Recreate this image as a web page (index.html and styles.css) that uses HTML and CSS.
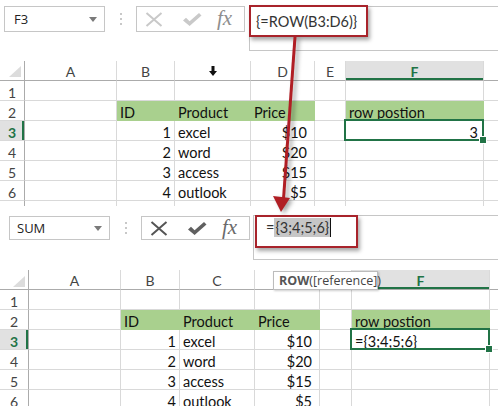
FILE: index.html
```html
<!DOCTYPE html>
<html>
<head>
<meta charset="utf-8">
<link rel="stylesheet" href="styles.css">
</head>
<body>
<section class="shot shot-top">
  <div class="fbar">
    <div class="namebox"><span>F3</span><i class="dd"></i></div>
    <div class="sep"><i></i><i></i><i></i></div>
    <div class="fxbox dim">
      <svg class="ico-x" width="18" height="15" viewBox="0 0 18 15"><path d="M1.5 1 L16.5 14 M16.5 1 L1.5 14" /></svg>
      <svg class="ico-ok" width="20" height="15" viewBox="0 0 20 15"><path d="M1 8.5 L4 5.8 L7.6 9.2 L17 1 L19.5 3.4 L7.6 14 Z" /></svg>
      <span class="fx">fx</span>
    </div>
    <div class="input in-top">
      <span class="ftext">{=ROW(B3:D6)}</span>
      <div class="redbox rb-top"></div>
    </div>
  </div>
  <div class="grid g-top">
    <div class="h corner"><i class="tri"></i></div><div class="h">A</div><div class="h">B</div><div class="h"><svg width="8" height="10" viewBox="0 0 8 10"><path d="M2.5 0 H5.5 V5 H8 L4 10 L0 5 H2.5 Z" fill="#111"/></svg></div><div class="h">D</div><div class="h">E</div><div class="h hsel">F</div><div class="h last"></div>
    <div class="rh">1</div><div class="c"></div><div class="c"></div><div class="c"></div><div class="c"></div><div class="c"></div><div class="c"></div><div class="c last"></div>
    <div class="rh">2</div><div class="c"></div><div class="c g">ID</div><div class="c g">Product</div><div class="c g">Price</div><div class="c"></div><div class="c g">row postion</div><div class="c last"></div>
    <div class="rh rsel">3</div><div class="c"></div><div class="c r">1</div><div class="c">excel</div><div class="c r cur">$10</div><div class="c"></div><div class="c r sel">3</div><div class="c last"></div>
    <div class="rh">4</div><div class="c"></div><div class="c r">2</div><div class="c">word</div><div class="c r cur">$20</div><div class="c"></div><div class="c"></div><div class="c last"></div>
    <div class="rh">5</div><div class="c"></div><div class="c r">3</div><div class="c">access</div><div class="c r cur">$15</div><div class="c"></div><div class="c"></div><div class="c last"></div>
    <div class="rh">6</div><div class="c"></div><div class="c r">4</div><div class="c">outlook</div><div class="c r cur">$5</div><div class="c"></div><div class="c"></div><div class="c last"></div>
    <div class="rh"></div><div class="c"></div><div class="c"></div><div class="c"></div><div class="c"></div><div class="c"></div><div class="c"></div><div class="c last"></div>
  </div>
</section>

<section class="shot shot-bottom">
  <div class="fbar">
    <div class="namebox"><span>SUM</span><i class="dd"></i></div>
    <div class="sep"><i></i><i></i><i></i></div>
    <div class="fxbox">
      <svg class="ico-x" width="18" height="15" viewBox="0 0 18 15"><path d="M1.5 1 L16.5 14 M16.5 1 L1.5 14" /></svg>
      <svg class="ico-ok" width="20" height="15" viewBox="0 0 20 15"><path d="M1 8.5 L4 5.8 L7.6 9.2 L17 1 L19.5 3.4 L7.6 14 Z" /></svg>
      <span class="fx">fx</span>
    </div>
    <div class="input in-bot">
      <span class="ftext">=<span class="hl">{3;4;5;6}</span><span class="caret"></span></span>
      <div class="redbox rb-bot"></div>
    </div>
  </div>
  <div class="grid g-bot">
    <div class="h corner"><i class="tri"></i></div><div class="h">A</div><div class="h">B</div><div class="h">C</div><div class="h"></div><div class="h"></div><div class="h hsel">F</div><div class="h last"></div>
    <div class="rh">1</div><div class="c"></div><div class="c"></div><div class="c"></div><div class="c"></div><div class="c"></div><div class="c"></div><div class="c last"></div>
    <div class="rh">2</div><div class="c"></div><div class="c g">ID</div><div class="c g">Product</div><div class="c g">Price</div><div class="c"></div><div class="c g">row postion</div><div class="c last"></div>
    <div class="rh rsel">3</div><div class="c"></div><div class="c r">1</div><div class="c">excel</div><div class="c r cur">$10</div><div class="c"></div><div class="c sel">={3;4;5;6}</div><div class="c last"></div>
    <div class="rh">4</div><div class="c"></div><div class="c r">2</div><div class="c">word</div><div class="c r cur">$20</div><div class="c"></div><div class="c"></div><div class="c last"></div>
    <div class="rh">5</div><div class="c"></div><div class="c r">3</div><div class="c">access</div><div class="c r cur">$15</div><div class="c"></div><div class="c"></div><div class="c last"></div>
    <div class="rh">6</div><div class="c"></div><div class="c r">4</div><div class="c">outlook</div><div class="c r cur">$5</div><div class="c"></div><div class="c"></div><div class="c last"></div>
    <div class="tip"><b>ROW</b>([reference])</div>
  </div>
</section>

<svg class="arrow" width="498" height="406" viewBox="0 0 498 406">
  <line x1="295" y1="37" x2="283.5" y2="199" />
  <path d="M273 196 L290 198 L281 212 Z" />
</svg>
</body>
</html>
```

FILE: styles.css
```css
* { box-sizing: border-box; margin: 0; padding: 0; }
html, body { width: 498px; height: 406px; overflow: hidden; background: #fff; }
body { position: relative; font-family: Lato, "Liberation Sans", sans-serif; color: #222; }

.shot { overflow: hidden; }
.shot-top { height: 206px; padding: 6px 0 0 4px; }
.shot-bottom { height: 200px; padding: 9px 0 0 9px; }

/* formula bar */
.fbar { display: flex; align-items: flex-start; }
.namebox {
  width: 101px; height: 26px; border: 1px solid #c6c6c6;
  display: flex; align-items: center; justify-content: space-between;
  padding: 0 7px 0 9px;
  font-family: "Open Sans", "Liberation Sans", sans-serif; font-size: 13px; color: #222;
}
.shot-bottom .namebox { height: 24px; margin-top: 1px; padding-left: 7px; }
.dd { width: 0; height: 0; border-left: 4px solid transparent; border-right: 4px solid transparent; border-top: 5px solid #7a7a7a; }
.sep { width: 31px; display: flex; flex-direction: column; align-items: center; gap: 3px; padding-top: 7px; }
.sep i { width: 2px; height: 2px; background: #c8c8c8; display: block; }
.fxbox {
  width: 109px; height: 26px; border: 1px solid #c6c6c6;
  display: flex; align-items: center; padding-left: 8px;
}
.shot-bottom .fxbox { height: 24px; margin-top: 1px; }
.ico-x { margin-right: 19px; }
.ico-x path { stroke: #555; stroke-width: 2; fill: none; }
.ico-ok { margin-right: 15px; }
.ico-ok path { fill: #606060; }
.fx { font-family: "Liberation Serif", "DejaVu Serif", serif; font-style: italic; font-size: 21px; color: #6a6a6a; line-height: 20px; margin-top: -2px; }
.dim .ico-x path { stroke: #c9c9c9; }
.dim .ico-ok path { fill: #c9c9c9; }
.dim .fx { color: #8e8e8e; }

.input {
  flex: 1; height: 45px; position: relative;
  border: 1px solid #c6c6c6; border-right: none;
  font-family: Lato, "Liberation Sans", sans-serif; font-size: 14.5px; color: #333;
}
.in-top { margin-left: 4px; padding: 5px 0 0 6px; }
.in-bot { margin-left: 3px; padding: 2px 0 0 12px; }
.ftext { line-height: 19px; display: inline-flex; align-items: center; }
.hl { background: #c6c6c6; padding: 0 1px; line-height: 19px; }
.caret { width: 1px; height: 19px; background: #111; display: inline-block; }
.redbox {
  position: absolute; border: 2px solid #a8232b;
  box-shadow: 2px 3px 4px rgba(0,0,0,0.35);
}
.rb-top { left: -1px; top: -2px; width: 119px; height: 32px; }
.rb-bot { left: 1px; top: -1px; width: 103px; height: 33px; }

/* grid */
.grid { display: grid; grid-auto-rows: 20px; position: relative; }
.g-top { margin: 10px 0 0 -4px; grid-template-columns: 25px 92px 58px 76px 64px 31px 138px 14px; }
.g-bot { margin: 10px 0 0 -9px; grid-template-columns: 29px 92px 59px 75px 65px 32px 138px 8px; }

.h, .rh, .c { border-right: 1px solid #d9d9d9; border-bottom: 1px solid #d9d9d9; font-size: 14.5px; line-height: 19px; padding-top: 2px; white-space: nowrap; }
.h { border-bottom-color: #ababab; color: #444; text-align: center; font-size: 14px; display: flex; justify-content: center; align-items: center; padding-top: 1px; border-right-color: #dadada; }
.h.corner { position: relative; border-right-color: #ababab; }
.tri { position: absolute; right: 3px; bottom: 3px; width: 0; height: 0; border-left: 12px solid transparent; border-bottom: 11px solid #dcdcdc; }
.g-bot .tri { right: 3px; bottom: 2px; }
.rh { color: #444; text-align: center; font-size: 14px; border-right-color: #ababab; }
.rsel { background: #e1e1e1; color: #217346; font-weight: bold; box-shadow: inset -2px 0 0 #217346; }
.hsel { background: #e1e1e1; color: #217346; font-weight: bold; box-shadow: inset 0 -2px 0 #217346; }
.c { padding-left: 3px; padding-right: 3px; color: #111; }
.c.r { text-align: right; }
.c.cur { padding-right: 7px; }
.c.r.sel { padding-right: 5px; }
.c.g { background: #a9d08e; border-right-color: #a9d08e; border-bottom-color: #a9d08e; }
.c.last, .h.last { border-right: none; }
.c.sel { position: relative; }
.c.sel::after { content: ""; position: absolute; left: -2px; top: -2px; right: -1px; bottom: -1px; border: 2px solid #217346; }
.c.sel::before { content: ""; position: absolute; right: -4px; bottom: -4px; width: 6px; height: 6px; background: #217346; border: 1px solid #fff; z-index: 1; }

.tip {
  position: absolute; left: 273px; top: 1px; width: 105px; height: 19px; z-index: 2;
  background: #fff; border: 1px solid #bcbcbc; box-shadow: 1px 1px 2px rgba(0,0,0,0.2);
  font-family: "Open Sans", "Liberation Sans", sans-serif; font-size: 12.5px; color: #444;
  line-height: 17px; padding-left: 5px; white-space: nowrap;
}
.tip b { font-weight: bold; color: #555; }

.arrow { position: absolute; left: 0; top: 0; pointer-events: none; filter: drop-shadow(3px 2px 2px rgba(0,0,0,0.35)); }
.arrow line { stroke: #b01e24; stroke-width: 3; }
.arrow path { fill: #b01e24; }
```
